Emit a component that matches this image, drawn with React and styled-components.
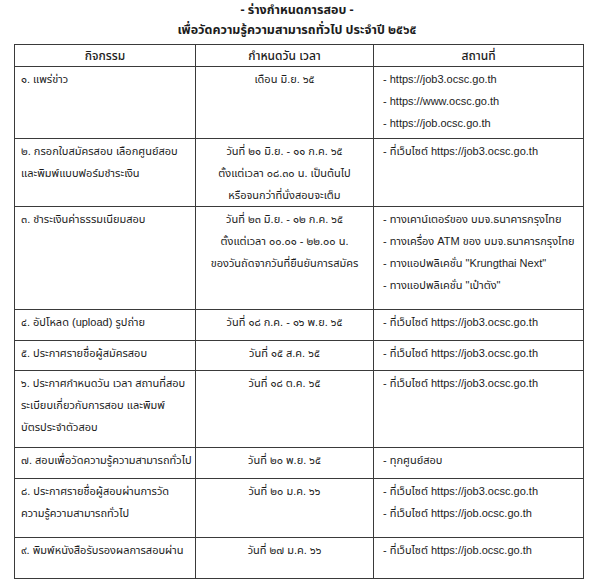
import styled, { createGlobalStyle } from 'styled-components';

const GlobalStyle = createGlobalStyle`
  html, body {
    margin: 0;
    padding: 0;
    background: #fff;
  }
  body {
    font-family: "Liberation Sans", "Noto Sans Thai", "Noto Sans", sans-serif;
    color: #1c1c1c;
  }
`;

const Page = styled.div`
  width: 594px;
  height: 587px;
  overflow: hidden;
  padding-top: 1px;
  box-sizing: border-box;
`;

const Title = styled.div`
  text-align: center;
  font-family: "Noto Sans Thai", "Noto Sans", sans-serif;
  font-size: 12.5px;
  font-weight: 700;
  line-height: 20px;
`;

const Table = styled.table`
  margin: 3px 0 0 14px;
  width: 569px;
  border-collapse: collapse;
  table-layout: fixed;
  font-size: 11px;
`;

const HeadCell = styled.th`
  border: 1px solid #3a3a3a;
  height: 21px;
  padding: 0;
  font-weight: 500;
  font-size: 12px;
  text-align: center;
  vertical-align: middle;
`;

const Row = styled.tr`
  height: ${p => p.$h}px;
`;

const Cell = styled.td`
  border: 1px solid #3a3a3a;
  padding: 1px 0 0 ${p => (p.$center ? 0 : p.$pad || 6)}px;
  vertical-align: top;
  text-align: ${p => (p.$center ? 'center' : 'left')};
  white-space: nowrap;
`;

const Line = styled.div`
  line-height: 22px;
`;

const site3 = '- ที่เว็บไซต์ https://job3.ocsc.go.th';
const siteJob = '- ที่เว็บไซต์ https://job.ocsc.go.th';

const rows = [
  {
    h: 72,
    act: ['๑. แพร่ข่าว'],
    when: ['เดือน มิ.ย. ๖๕'],
    where: ['- https://job3.ocsc.go.th', '- https://www.ocsc.go.th', '- https://job.ocsc.go.th'],
  },
  {
    h: 68,
    act: ['๒. กรอกใบสมัครสอบ เลือกศูนย์สอบ', 'และพิมพ์แบบฟอร์มชำระเงิน'],
    when: ['วันที่ ๒๑ มิ.ย. - ๑๑ ก.ค. ๖๕', 'ตั้งแต่เวลา ๐๘.๓๐ น. เป็นต้นไป', 'หรือจนกว่าที่นั่งสอบจะเต็ม'],
    where: [site3],
  },
  {
    h: 103,
    act: ['๓. ชำระเงินค่าธรรมเนียมสอบ'],
    when: ['วันที่ ๒๓ มิ.ย. - ๑๒ ก.ค. ๖๕', 'ตั้งแต่เวลา ๐๐.๐๑ - ๒๒.๐๐ น.', 'ของวันถัดจากวันที่ยืนยันการสมัคร'],
    where: [
      '- ทางเคาน์เตอร์ของ บมจ.ธนาคารกรุงไทย',
      '- ทางเครื่อง ATM ของ บมจ.ธนาคารกรุงไทย',
      '- ทางแอปพลิเคชั่น "Krungthai Next"',
      '- ทางแอปพลิเคชั่น "เป๋าตัง"',
    ],
  },
  {
    h: 31,
    act: ['๔. อัปโหลด (upload) รูปถ่าย'],
    when: ['วันที่ ๑๘ ก.ค. - ๑๖ พ.ย. ๖๕'],
    where: [site3],
  },
  {
    h: 30,
    act: ['๕. ประกาศรายชื่อผู้สมัครสอบ'],
    when: ['วันที่ ๑๕ ส.ค. ๖๕'],
    where: [site3],
  },
  {
    h: 77,
    act: ['๖. ประกาศกำหนดวัน เวลา สถานที่สอบ', 'ระเบียบเกี่ยวกับการสอบ และพิมพ์', 'บัตรประจำตัวสอบ'],
    when: ['วันที่ ๑๘ ต.ค. ๖๕'],
    where: [site3],
  },
  {
    h: 31,
    act: ['๗. สอบเพื่อวัดความรู้ความสามารถทั่วไป'],
    when: ['วันที่ ๒๐ พ.ย. ๖๕'],
    where: ['- ทุกศูนย์สอบ'],
  },
  {
    h: 59,
    act: ['๘. ประกาศรายชื่อผู้สอบผ่านการวัด', 'ความรู้ความสามารถทั่วไป'],
    when: ['วันที่ ๒๐ ม.ค. ๖๖'],
    where: [site3, siteJob],
  },
  {
    h: 41,
    act: ['๙. พิมพ์หนังสือรับรองผลการสอบผ่าน'],
    when: ['วันที่ ๒๗ ม.ค. ๖๖'],
    where: [siteJob],
  },
];

const Lines = ({ items }) => items.map((t, i) => <Line key={i}>{t}</Line>);

export default function App() {
  return (
    <Page>
      <GlobalStyle />
      <Title>- ร่างกำหนดการสอบ -</Title>
      <Title>เพื่อวัดความรู้ความสามารถทั่วไป ประจำปี ๒๕๖๕</Title>
      <Table>
        <colgroup>
          <col style={{ width: 181 }} />
          <col style={{ width: 178 }} />
          <col style={{ width: 210 }} />
        </colgroup>
        <thead>
          <tr>
            <HeadCell>กิจกรรม</HeadCell>
            <HeadCell>กำหนดวัน เวลา</HeadCell>
            <HeadCell>สถานที่</HeadCell>
          </tr>
        </thead>
        <tbody>
          {rows.map((r, i) => (
            <Row key={i} $h={r.h}>
              <Cell>
                <Lines items={r.act} />
              </Cell>
              <Cell $center>
                <Lines items={r.when} />
              </Cell>
              <Cell $pad={9}>
                <Lines items={r.where} />
              </Cell>
            </Row>
          ))}
        </tbody>
      </Table>
    </Page>
  );
}
